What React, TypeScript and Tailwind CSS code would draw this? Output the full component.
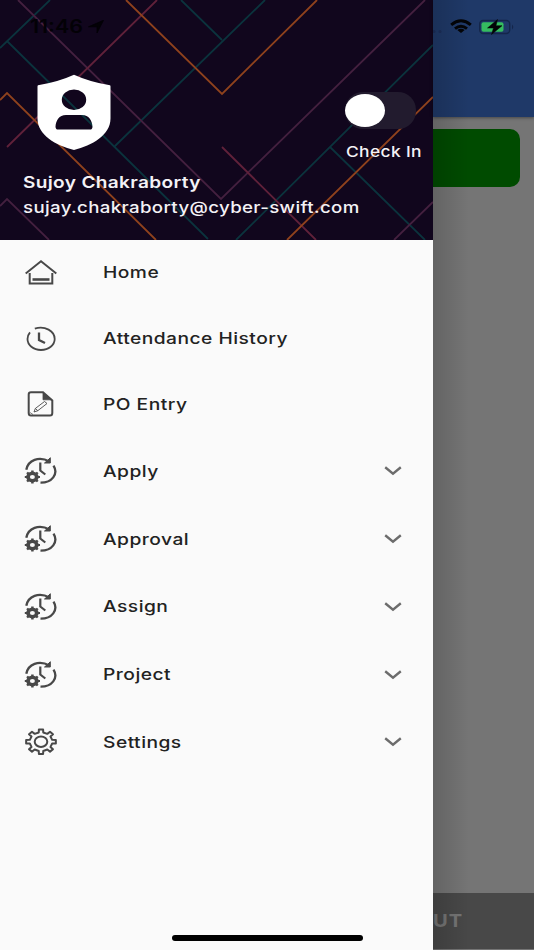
import React from "react";

const font = "font-['Inter','Roboto',sans-serif]";

function Pattern() {
  return (
    <svg className="absolute inset-0" width="433" height="240" viewBox="0 0 433 240" fill="none" strokeWidth="1.8">
      <g stroke="#0b333d">
        <path d="M50 0L0 48M7.500 41.500L208 239M265 0L115 146M181 0L222 40M433 45L236 240M330 147L425 240" />
      </g>
      <g stroke="#44203f">
        <path d="M18 0L221 199L425 0M0 206L7 199L49 240M433 202L394 240" />
      </g>
      <g stroke="#60213a">
        <path d="M157 0L7 147M222 147L316 240" />
      </g>
      <g stroke="#8f421d">
        <path d="M126 0L222 94L317 0M0 100L7 93L156 240M433 97L287 240" />
      </g>
    </svg>
  );
}

function Shield() {
  return (
    <svg className="block" width="76" height="77" viewBox="0 0 76 77">
      <path
        fill="#fff"
        fillRule="evenodd"
        d="M38 .7Q54 8 74 11.200Q74.500 11.500 74.500 12.500V44.500C74.500 61 56 71.500 38 76C20 71.500 1.500 61 1.500 44.500V12.500Q1.500 11.500 2 11.200Q22 8 38 .7ZM38 15.500A12.200 10.200 0 1 0 38 35.900A12.200 10.200 0 1 0 38 15.500ZM30 41C23 41 20 46.500 19.500 52.500Q19.500 55.600 22 55.600H54Q56.500 55.600 56.500 52.500C56 46.500 53 41 46 41Z"
      />
    </svg>
  );
}

function HomeIcon() {
  return (
    <svg className="mt-[2px]" width="34" height="28" viewBox="0 0 34 28" fill="none" stroke="#484848">
      <path d="M1.700 14.500L17 2.300L32.300 14.500" strokeWidth="2" />
      <path d="M5.700 14V24.500H28.300V14" strokeWidth="2" />
      <path d="M8.500 20.500H25.500" strokeWidth="2.600" />
    </svg>
  );
}

function ClockIcon() {
  return (
    <svg className="mt-[2px]" width="34" height="28" viewBox="0 0 34 28" fill="none" stroke="#484848">
      <path d="M10.800 3.600C21 .5 30.700 6 30.700 14C30.700 20 24.700 25 17 25C9.300 25 3.500 20 3.500 14C3.500 11.500 4.500 9.200 6 7.400" strokeWidth="1.800" />
      <path d="M15 7.500V15L21 18" strokeWidth="2.300" />
    </svg>
  );
}

function NoteIcon() {
  return (
    <svg className="mt-px" width="34" height="28" viewBox="0 0 34 28" fill="none" stroke="#484848">
      <path d="M7 2.300H19L28.300 10.500V23Q28.300 25.500 26 25.500H7Q4.700 25.500 4.700 23V4.500Q4.700 2.300 7 2.300Z" strokeWidth="2" />
      <path d="M19 2.500V9.800H28Z" fill="#484848" strokeWidth=".8" />
      <path d="M10 22L11.300 18.500L20.500 11.500L23 13.500L13.800 20.700ZM11.300 18.500L13.800 20.700" strokeWidth=".9" />
      <path d="M6 22.500L9 24.500" strokeWidth=".7" />
    </svg>
  );
}

function gearPath(cx: number, cy: number, rx: number, ry: number, inner: number, outerHalf: number, baseHalf: number) {
  const points: string[] = [];
  for (let i = 0; i < 8; i++) {
    const a = (i * Math.PI) / 4;
    [
      [-baseHalf, inner],
      [-outerHalf, 1],
      [outerHalf, 1],
      [baseHalf, inner],
    ].forEach(([d, r]) => {
      points.push(`${(cx + Math.sin(a + d) * rx * r).toFixed(2)} ${(cy - Math.cos(a + d) * ry * r).toFixed(2)}`);
    });
  }
  return `M${points.join("L")}Z`;
}

function TimeGearIcon() {
  return (
    <svg className="mt-px" width="34" height="28" viewBox="0 0 34 28" fill="none" stroke="#484848">
      <path d="M2.300 12.800C4 3 15 -1.200 25.500 4.500" strokeWidth="2.300" />
      <path d="M26.300 .7V6H20.500L23.500 3.500Z" strokeWidth="1" fill="#484848" />
      <path d="M29.500 8.700C34.700 17 28 25.800 16.500 25.700" strokeWidth="2.300" />
      <path d="M16.300 5.500V13.500L21.300 17.500" strokeWidth="2.200" />
      <path d={gearPath(8.4, 20, 7.7, 6.5, 0.82, 0.16, 0.2)} fill="#484848" stroke="none" />
      <ellipse cx="8.400" cy="20" rx="2.500" ry="2.100" fill="#fafafa" stroke="none" />
    </svg>
  );
}

function SettingsIcon() {
  return (
    <svg className="mt-px" width="34" height="28" viewBox="0 0 34 28" fill="none" stroke="#484848" strokeWidth="2" strokeLinejoin="round">
      <path d={gearPath(17, 13.7, 15, 12.4, 0.76, 0.14, 0.2)} />
      <ellipse cx="17" cy="13.700" rx="6.300" ry="5.200" />
    </svg>
  );
}

function Chevron() {
  return (
    <svg className="mt-px" width="18" height="12" viewBox="0 0 18 12" fill="none" stroke="#6c6c6c" strokeWidth="2.400">
      <path d="M1.200 2.300L9 8.600L16.800 2.300" />
    </svg>
  );
}

const items = [
  { label: "Home", Icon: HomeIcon, expandable: false },
  { label: "Attendance History", Icon: ClockIcon, expandable: false },
  { label: "PO Entry", Icon: NoteIcon, expandable: false },
  { label: "Apply", Icon: TimeGearIcon, expandable: true },
  { label: "Approval", Icon: TimeGearIcon, expandable: true },
  { label: "Assign", Icon: TimeGearIcon, expandable: true },
  { label: "Project", Icon: TimeGearIcon, expandable: true },
  { label: "Settings", Icon: SettingsIcon, expandable: true },
];

function Drawer() {
  return (
    <aside className="flex h-full w-[433px] shrink-0 flex-col bg-[#fafafa]">
      <header className="relative h-[239.5px] shrink-0 overflow-hidden bg-[#11061d]">
        <Pattern />
        <div className="relative flex h-[74px] items-start pt-[17px] pl-[30px] text-[#030106]">
          <span className="w-[58px] text-[18px] leading-[20px] font-semibold">
            <span className="inline-block origin-left scale-x-[1.19]">11:46</span>
          </span>
          <svg className="mt-[3px]" width="16" height="13" viewBox="0 0 16 13">
            <path d="M15.500 .3L9 13V6.800H.5Z" fill="#030106" stroke="#030106" strokeWidth=".8" strokeLinejoin="round" />
          </svg>
        </div>
        <div className="relative flex justify-between pl-9">
          <Shield />
          <div className="mr-[11px] w-[77px] pt-[18px]">
            <div className="flex h-[37px] w-[71px] items-center rounded-[18px] bg-[#221b2e]">
              <div className="h-[33px] w-10 rounded-[50%] bg-white" />
            </div>
            <p className="mt-[13px] pl-px text-[15px] leading-[20px] font-medium whitespace-nowrap text-[#f4f2f6]">
              <span className="inline-block origin-left scale-x-[1.16] tracking-[0.3px]">Check In</span>
            </p>
          </div>
        </div>
        <div className="relative mt-2 pl-[23px] whitespace-nowrap text-[#f4f2f6]">
          <p className="h-6 text-[16px] leading-[24px] font-semibold">
            <span className="inline-block origin-left scale-x-[1.19] tracking-[0.3px]">Sujoy Chakraborty</span>
          </p>
          <p className="h-6 pt-px text-[16px] leading-[25px] font-[450]">
            <span className="inline-block origin-left scale-x-[1.167] tracking-[0.3px]">sujay.chakraborty@cyber-swift.com</span>
          </p>
        </div>
      </header>
      <nav className="flex-1">
        {items.map(({ label, Icon, expandable }) => (
          <div
            key={label}
            className={`flex items-center pr-[31px] pl-6 ${expandable ? "h-[67.8px]" : "h-[65.8px]"}`}
          >
            <Icon />
            <span className="ml-[45px] flex-1 text-[16px] leading-[20px] font-[480] whitespace-nowrap text-[#222]">
              <span className="inline-block origin-left scale-x-[1.2] tracking-[0.4px]">{label}</span>
            </span>
            {expandable && <Chevron />}
          </div>
        ))}
      </nav>
    </aside>
  );
}

function StatusIcons() {
  return (
    <svg className="block" width="101" height="40" viewBox="433 0 101 40">
      <g fill="#1b2f5a">
        <circle cx="434" cy="31.500" r="1.500" />
        <circle cx="440" cy="31.500" r="1.500" />
      </g>
      <g fill="none" stroke="#030407" strokeWidth="3">
        <path d="M451.200 24.800Q461 16.800 470.800 24.800" />
        <path d="M455 28.600Q461 23.800 467 28.600" />
      </g>
      <path d="M457.300 30Q461 27.700 464.700 30L461 33Z" fill="#030407" />
      <rect x="479.700" y="20.500" width="30" height="13" rx="3.500" fill="none" stroke="#14264a" strokeWidth="1.400" />
      <path d="M512 24.500Q514.500 27 512 29.500Z" fill="#14264a" />
      <rect x="481.500" y="22.200" width="22" height="9.600" rx="2" fill="#35bc60" />
      <path d="M497.500 19.500L487.500 28H493.500L491.500 34.500L502 25.700H496Z" fill="#030407" stroke="#030407" strokeWidth=".5" />
    </svg>
  );
}

export default function App() {
  return (
    <div className={`relative flex h-[950px] w-[534px] overflow-hidden bg-[#757575] ${font}`}>
      <Drawer />
      <main className="relative flex flex-1 flex-col">
        <div className="h-[117px] bg-[#1f3968] shadow-[0_1px_3px_rgba(0,0,0,0.4)]">
          <StatusIcons />
        </div>
        <div className="mt-3 mr-[14.5px] h-[58px] rounded-r-[10px] bg-[#004b00]" />
        <div className="mt-auto mb-[1.500px] flex h-[55.5px] items-center overflow-hidden bg-[#484848] text-[18px] leading-[20px] font-bold text-[#757575]">
          <span className="inline-block origin-left scale-x-[1.12] tracking-[0.8px]">UT</span>
        </div>
        <div className="absolute inset-y-0 left-0 w-9 bg-gradient-to-r from-black/15 to-transparent" />
      </main>
      <div className="absolute bottom-[9px] left-[172px] h-[6px] w-[191px] rounded-full bg-black" />
    </div>
  );
}
